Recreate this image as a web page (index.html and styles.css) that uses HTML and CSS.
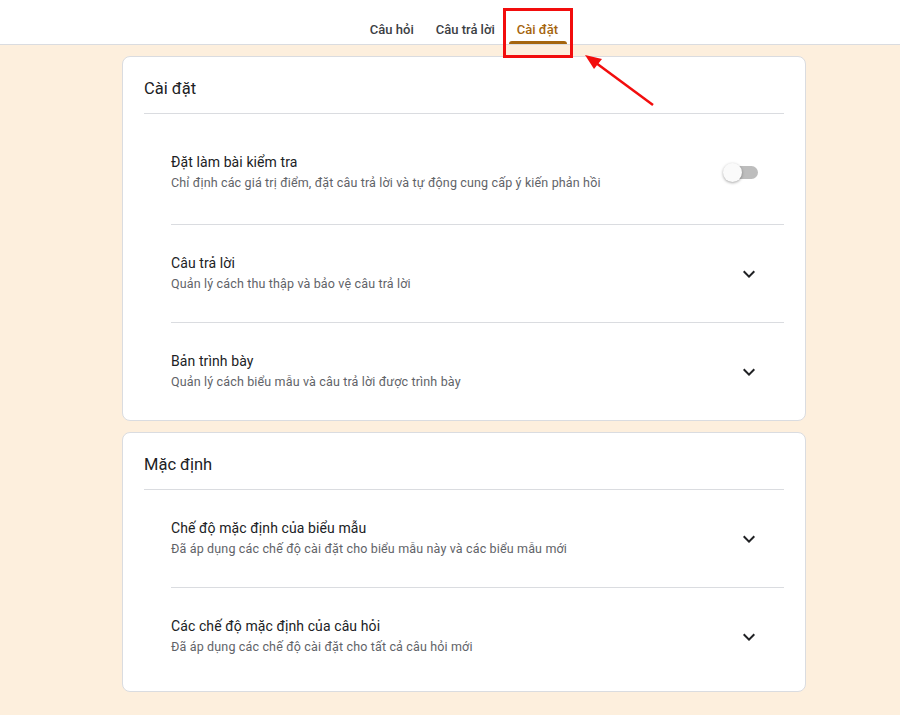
FILE: index.html
```html
<!DOCTYPE html>
<html lang="vi">
  <head>
    <meta charset="utf-8">
    <meta name="viewport" content="width=device-width, initial-scale=1.0">
    <title>Cài đặt</title>
    <link rel="stylesheet" href="styles.css">
  </head>

  <body>
    <header class="topbar">
      <nav class="tabs">
        <a class="tab">Câu hỏi</a>
        <a class="tab">Câu trả lời</a>
        <a class="tab active">Cài đặt</a>
      </nav>
    </header>

    <main class="page">
      <section class="card">
        <h2 class="card-title">Cài đặt</h2>
        <ul class="rows">
          <li class="row row-first">
            <div class="text">
              <div class="title">Đặt làm bài kiểm tra</div>
              <div class="desc">Chỉ định các giá trị điểm, đặt câu trả lời và tự động cung cấp ý kiến phản hồi</div>
            </div>
            <span class="switch"><span class="thumb"></span></span>
          </li>
          <li class="row">
            <div class="text">
              <div class="title">Câu trả lời</div>
              <div class="desc">Quản lý cách thu thập và bảo vệ câu trả lời</div>
            </div>
            <svg class="chevron" viewBox="0 0 24 24"><path d="M16.59 8.59 12 13.17 7.41 8.59 6 10l6 6 6-6z"/></svg>
          </li>
          <li class="row">
            <div class="text">
              <div class="title">Bản trình bày</div>
              <div class="desc">Quản lý cách biểu mẫu và câu trả lời được trình bày</div>
            </div>
            <svg class="chevron" viewBox="0 0 24 24"><path d="M16.59 8.59 12 13.17 7.41 8.59 6 10l6 6 6-6z"/></svg>
          </li>
        </ul>
      </section>

      <section class="card">
        <h2 class="card-title">Mặc định</h2>
        <ul class="rows">
          <li class="row">
            <div class="text">
              <div class="title">Chế độ mặc định của biểu mẫu</div>
              <div class="desc">Đã áp dụng các chế độ cài đặt cho biểu mẫu này và các biểu mẫu mới</div>
            </div>
            <svg class="chevron" viewBox="0 0 24 24"><path d="M16.59 8.59 12 13.17 7.41 8.59 6 10l6 6 6-6z"/></svg>
          </li>
          <li class="row row-last">
            <div class="text">
              <div class="title">Các chế độ mặc định của câu hỏi</div>
              <div class="desc">Đã áp dụng các chế độ cài đặt cho tất cả câu hỏi mới</div>
            </div>
            <svg class="chevron" viewBox="0 0 24 24"><path d="M16.59 8.59 12 13.17 7.41 8.59 6 10l6 6 6-6z"/></svg>
          </li>
        </ul>
      </section>
    </main>

    <!-- annotation: red box + arrow pointing at the settings tab -->
    <div class="mark-box"></div>
    <svg class="mark-arrow" width="900" height="120" viewBox="0 0 900 120">
      <line x1="653" y1="105" x2="592" y2="60" stroke="#f20d0d" stroke-width="2.5"/>
      <polygon points="585,55 602,59 594,69" fill="#f20d0d"/>
    </svg>
  </body>
</html>
```

FILE: styles.css
```css
* {
margin: 0;
padding: 0;
box-sizing: border-box;
}

body {
background: #fdefdd;
font-family: Roboto, "Noto Sans", sans-serif;
color: #202124;
}

.topbar {
height: 45px;
background: #fff;
border-bottom: 1px solid #dadce0;
padding-left: 28px;
}

.tabs {
display: flex;
justify-content: center;
height: 44px;
}

.tab {
position: relative;
display: flex;
align-items: center;
padding: 14px 11px 0;
font-size: 13px;
font-weight: 500;
color: #3c4043;
}

.tab.active {
color: #a5650d;
}

.tab.active::after {
content: "";
position: absolute;
left: 3px;
right: 2px;
bottom: 0;
height: 3px;
border-radius: 3px 3px 0 0;
background: #a5650d;
}

.page {
padding: 11px 0 20px 28px;
}

.card {
width: 684px;
margin: 0 auto 11px;
background: #fff;
border: 1px solid #dadce0;
border-radius: 8px;
padding: 0 21px;
}

.card-title {
font-size: 16.5px;
font-weight: 400;
line-height: 20px;
padding: 22px 0 14px;
border-bottom: 1px solid #dadce0;
}

.rows {
list-style: none;
margin-left: 27px;
}

.row {
display: flex;
align-items: center;
justify-content: space-between;
padding: 28px 0;
border-top: 1px solid #dadce0;
}

.row:first-child {
border-top: none;
}

.row-first {
padding: 38px 0 31px;
}

.row-last {
padding-bottom: 34px;
}

.title {
font-size: 14px;
line-height: 20px;
letter-spacing: 0.1px;
color: #202124;
}

.desc {
margin-top: 1px;
font-size: 12.5px;
line-height: 20px;
letter-spacing: 0.15px;
color: #5f6368;
}

.chevron {
width: 24px;
height: 24px;
margin-right: 23px;
fill: #202124;
flex-shrink: 0;
}

.switch {
position: relative;
width: 30px;
height: 13px;
margin-right: 26px;
border-radius: 7px;
background: #bdbdbd;
flex-shrink: 0;
}

.switch .thumb {
position: absolute;
left: -5px;
top: -3px;
width: 19px;
height: 19px;
border-radius: 50%;
background: #fafafa;
box-shadow: 0 1px 3px rgba(0,0,0,0.35);
}

.mark-box {
position: absolute;
left: 503px;
top: 8px;
width: 70px;
height: 50px;
border: 3px solid #f20d0d;
}

.mark-arrow {
position: absolute;
left: 0;
top: 0;
}
```
